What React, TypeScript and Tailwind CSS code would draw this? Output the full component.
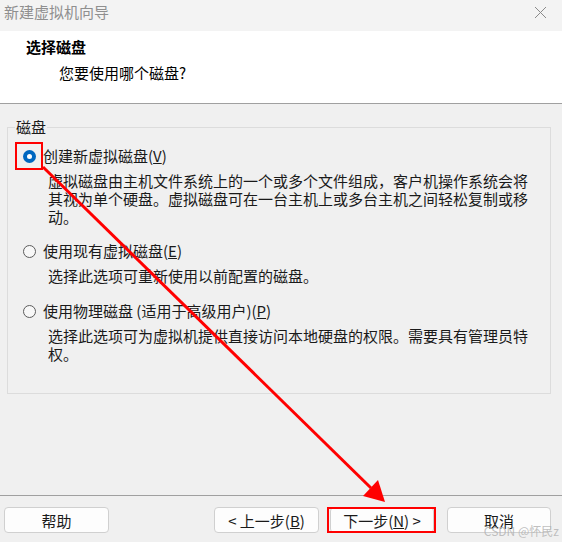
import { ReactNode } from "react";

const Radio = ({ checked }: { checked?: boolean }) =>
  checked ? (
    <span className="relative flex h-[13px] w-[13px] shrink-0 items-center justify-center rounded-full bg-[#0067c0]">
      <span className="h-[5px] w-[5px] rounded-full bg-white" />
      <span className="absolute -left-[8px] -top-[8px] h-[28px] w-[28px] border-2 border-[#ff0000]" />
    </span>
  ) : (
    <span className="h-[13px] w-[13px] shrink-0 rounded-full border border-[#5c5c5c] bg-[#f7f7f7]" />
  );

const Option = ({
  label,
  checked,
  children,
  className = "",
}: {
  label: ReactNode;
  checked?: boolean;
  children: ReactNode;
  className?: string;
}) => (
  <div className={className}>
    <div className="flex h-[18px] items-center gap-[7px] leading-[18px]">
      <Radio checked={checked} />
      <span className="whitespace-nowrap">{label}</span>
    </div>
    <p className="mt-[7px] whitespace-nowrap pl-[25px] leading-[18px]">{children}</p>
  </div>
);

const Btn = ({
  children,
  hot,
  className = "w-[105px]",
}: {
  children: ReactNode;
  hot?: boolean;
  className?: string;
}) => (
  <button
    className={`relative flex h-[26px] items-center justify-center rounded-[4px] border border-[#d0d0d0] bg-[#fdfdfd] text-[15px] leading-none text-[#1a1a1a] ${className}`}
  >
    {children}
    {hot && (
      <span className="absolute -bottom-[1px] -left-[4px] -right-[3px] -top-[1px] border-2 border-[#ff0000]" />
    )}
  </button>
);

export default function App() {
  return (
    <div className="relative flex h-[542px] w-[562px] flex-col overflow-hidden bg-[#f0f0f0] font-['Noto_Sans_CJK_SC',sans-serif] text-[15px] text-[#1a1a1a]">
      {/* title bar */}
      <div className="flex h-[31px] shrink-0 items-center justify-between bg-[#f3f3f3] pl-[4px] pr-[15px]">
        <span className="pb-[6px] text-[15px] text-[#8f8f8f]">新建虚拟机向导</span>
        <svg width="13" height="13" viewBox="0 0 13 13" className="mb-[7px]">
          <path d="M1 1L12 12M12 1L1 12" stroke="#8a8a8a" strokeWidth="1" />
        </svg>
      </div>

      {/* header */}
      <div className="h-[73px] shrink-0 border-b border-[#a0a0a0] bg-white pl-[26px] pt-[7px]">
        <div className="font-bold leading-[18px] text-black">选择磁盘</div>
        <div className="mt-[8px] pl-[33px] leading-[18px] text-black">您要使用哪个磁盘?</div>
      </div>

      {/* body */}
      <div className="flex-1 pl-[7px] pr-[11px] pt-[14px]">
        <fieldset className="border border-[#dcdcdc] pb-[30px] pl-[15px]">
          <legend className="-ml-[8px] px-[1px] leading-[18px]">磁盘</legend>
          <Option
            checked
            className="pt-[11px]"
            label={
              <>
                创建新虚拟磁盘(<u>V</u>)
              </>
            }
          >
            虚拟磁盘由主机文件系统上的一个或多个文件组成，客户机操作系统会将
            <br />
            其视为单个硬盘。虚拟磁盘可在一台主机上或多台主机之间轻松复制或移
            <br />
            动。
          </Option>
          <Option
            className="mt-[16px]"
            label={
              <>
                使用现有虚拟磁盘(<u>E</u>)
              </>
            }
          >
            选择此选项可重新使用以前配置的磁盘。
          </Option>
          <Option
            className="mt-[17px]"
            label={
              <>
                使用物理磁盘 (适用于高级用户)(<u>P</u>)
              </>
            }
          >
            选择此选项可为虚拟机提供直接访问本地硬盘的权限。需要具有管理员特
            <br />
            权。
          </Option>
        </fieldset>
      </div>

      {/* footer */}
      <div className="flex h-[47px] shrink-0 items-start border-t border-[#a0a0a0] pl-[4px] pr-[11px] pt-[11px]">
        <Btn>帮助</Btn>
        <Btn className="ml-auto w-[105px]">
          &lt; 上一步(<u>B</u>)
        </Btn>
        <Btn hot className="ml-[11px] w-[104px]">
          下一步(<u>N</u>) &gt;
        </Btn>
        <Btn className="ml-[13px] w-[104px]">取消</Btn>
      </div>

      {/* annotation arrow */}
      <svg
        className="pointer-events-none absolute inset-0"
        width="562"
        height="542"
        viewBox="0 0 562 542"
      >
        <line x1="43" y1="167" x2="371" y2="488" stroke="#ff0000" strokeWidth="3" />
        <polygon points="385,502 363,496 378,480" fill="#ff0000" />
      </svg>

      {/* watermark */}
      <span className="pointer-events-none absolute bottom-[5px] right-[3px] text-[12px] leading-none text-[#b0b0b0]/80">
        CSDN @怀民z
      </span>
    </div>
  );
}
